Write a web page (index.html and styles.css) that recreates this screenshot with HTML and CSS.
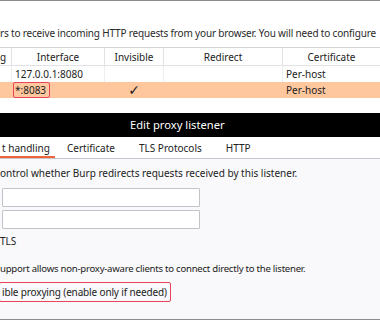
FILE: index.html
```html
<!DOCTYPE html>
<html>
<head>
<title>Proxy listeners</title>
<link rel="stylesheet" href="styles.css">
</head>
<body>

<div class="intro">
  rs to receive incoming HTTP requests from your browser. You will need to configure
</div>

<div class="grid">
  <div class="row head">
    <div class="cell">g</div>
    <div class="cell">Interface</div>
    <div class="cell">Invisible</div>
    <div class="cell">Redirect</div>
    <div class="cell">Certificate</div>
  </div>
  <div class="row">
    <div class="cell"></div>
    <div class="cell left">127.0.0.1:8080</div>
    <div class="cell"></div>
    <div class="cell"></div>
    <div class="cell left">Per-host</div>
  </div>
  <div class="row selected">
    <div class="cell"></div>
    <div class="cell left"><span class="mark">*:8083</span></div>
    <div class="cell tick">&#10003;</div>
    <div class="cell"></div>
    <div class="cell left">Per-host</div>
  </div>
</div>

<div class="dialog">
  <div class="titlebar">Edit proxy listener</div>
  <div class="tabs">
    <div class="tab active">t handling</div>
    <div class="tab">Certificate</div>
    <div class="tab">TLS Protocols</div>
    <div class="tab">HTTP</div>
  </div>
  <div class="panel">
    <p class="line">ontrol whether Burp redirects requests received by this listener.</p>
    <div class="field"></div>
    <div class="field"></div>
    <p class="line tls">TLS</p>
    <p class="line support">upport allows non-proxy-aware clients to connect directly to the listener.</p>
    <div class="option"><span class="mark wide">ible proxying (enable only if needed)</span></div>
  </div>
</div>

</body>
</html>
```

FILE: styles.css
```css
* {box-sizing: border-box}
html {
  margin: 0; padding: 0;
}
body {
  margin: 0; padding: 0; overflow: hidden;
  width: 380px;
  height: 320px;
  background: white;
  font-family: "Noto Sans", "Open Sans", sans-serif;
  font-size: 10px;
  color: #222;
  border-top: 1px solid #8c8c8c;
}

.intro {
  height: 46px;
  padding-top: 24px;
  line-height: 16px;
  letter-spacing: -0.17px;
  white-space: nowrap;
  overflow: hidden;
  color: #2a2a2a;
}

.grid {
  border-top: 1px solid #d4d4d8;
}
.row {
  display: grid;
  grid-template-columns: 12px 93px 59px 119px 97px;
  height: 16px;
  line-height: 16px;
  white-space: nowrap;
}
.row .cell {
  border-right: 1px solid #eeeef0;
  text-align: center;
  overflow: hidden;
}
.row .cell:last-child {
  border-right: none;
}
.row.head {
  height: 18px;
  line-height: 18px;
  border-bottom: 1px solid #e2e2e6;
}
.row.head .cell {
  border-right-color: #e2e2e6;
}
.row .left {
  text-align: left;
  padding-left: 3px;
}
.row.head .cell:first-child {
  text-align: right;
  padding-right: 6px;
}
.row.selected {
  background: #ffc79e;
}
.row.selected .cell {
  border-right-color: transparent;
}
.mark {
  display: inline-block;
  border: 1px solid #e8445a;
  border-radius: 2px;
  line-height: 14px;
  padding: 0 3px 0 1px;
  margin-left: -2px;
}
.tick {
  font-family: "DejaVu Sans", sans-serif;
  font-size: 14px;
}

.dialog {
  margin-top: 15px;
}
.titlebar {
  background: black;
  color: white;
  height: 24px;
  line-height: 24px;
  font-size: 11.2px;
  padding-left: 130px;
}
.tabs {
  display: flex;
  height: 22px;
  border-bottom: 1px solid #c6c6cc;
  background: white;
}
.tab {
  padding: 4px 12px 0 12px;
  white-space: nowrap;
}
.tab.active {
  padding-left: 2px;
  border-bottom: 2px solid #f0643c;
  width: 55px;
}
.panel {
  background: #f9f9fb;
  height: 161px;
  padding-top: 6px;
  border-bottom: 1px solid #8c8c8c;
}
.line {
  margin: 0;
  white-space: nowrap;
  line-height: 16px;
}
.field {
  width: 198px;
  height: 19px;
  margin: 7px 0 3px 2px;
  background: white;
  border: 1px solid #c2c2c8;
  border-radius: 1px;
}
.field + .field {
  margin-top: 0;
}
.tls {
  margin-top: 4px;
}
.support {
  margin-top: 12px;
  font-size: 9.6px;
  letter-spacing: -0.25px;
}
.option {
  margin-top: 5px;
  line-height: 18px;
}
.mark.wide {
  line-height: 18px;
  padding: 0 3px 0 2px;
  margin-left: -1px;
  letter-spacing: -0.15px;
}
```
